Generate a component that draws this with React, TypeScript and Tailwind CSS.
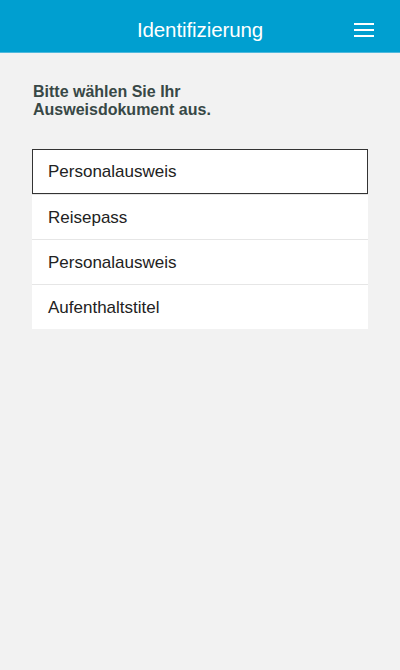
const docs = ["Personalausweis", "Reisepass", "Personalausweis", "Aufenthaltstitel"];

export default function App() {
  return (
    <div className="min-h-[670px] w-[400px] bg-[#f2f2f2]" style={{ fontFamily: '"Liberation Sans", Arial, sans-serif' }}>
      <header className="relative flex h-[53px] items-center justify-center bg-[#009fd0] border-b border-[#4fb9dd] pt-[9px]">
        <h1 className="text-[20.5px] text-white tracking-[-0.1px]">Identifizierung</h1>
        <button className="absolute right-[26px] top-[23px] flex w-[20px] flex-col gap-[4px]">
          <span className="h-[2px] w-full bg-white" />
          <span className="h-[2px] w-full bg-white" />
          <span className="h-[2px] w-full bg-white" />
        </button>
      </header>

      <main className="px-[32px] pt-[30px]">
        <p className="pl-[1px] text-[16px] font-bold leading-[18px] text-[#384846]">
          Bitte wählen Sie Ihr
          <br />
          Ausweisdokument aus.
        </p>

        <ul className="mt-[30px] bg-white">
          {docs.map((d, i) => (
            <li
              key={i}
              className={
                i === 0
                  ? "flex h-[45px] items-center border border-[#333] pl-[15px] pt-[1px] text-[17px] text-[#222]"
                  : "flex h-[45px] items-center border-t border-[#e6e6e6] pl-[16px] pt-[1px] text-[17px] text-[#222]"
              }
            >
              {d}
            </li>
          ))}
        </ul>
      </main>
    </div>
  );
}
